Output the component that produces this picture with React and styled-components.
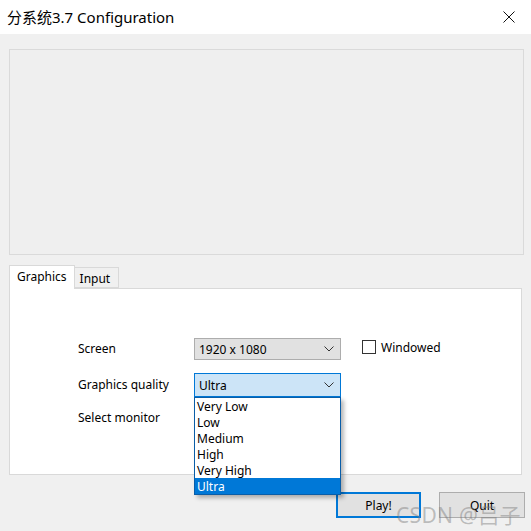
import React from "react";
import styled, { createGlobalStyle } from "styled-components";

const Global = createGlobalStyle`
  html, body { margin: 0; padding: 0; background: #f0f0f0; }
  body { font-family: "Segoe UI", "Noto Sans", "Noto Sans CJK SC", sans-serif; color: #000; }
`;

const Window = styled.div`
  width: 531px;
  height: 531px;
  background: #f0f0f0;
  position: relative;
  overflow: hidden;
`;

const TitleBar = styled.div`
  height: 34px;
  background: #fff;
  display: flex;
  align-items: center;
  justify-content: space-between;
  padding: 0 16px 0 7px;
  box-sizing: border-box;
`;

const Title = styled.div`
  font-size: 15px;
  font-family: "Segoe UI", "Noto Sans", "Noto Sans CJK SC", sans-serif;
  color: #000;
  margin-top: -2px;
`;

const CloseBtn = styled.div`
  width: 12px;
  height: 12px;
  display: flex;
`;

const Body = styled.div`
  padding: 15px 7px 0 9px;
  display: flex;
  flex-direction: column;
`;

const ImagePanel = styled.div`
  width: 515px;
  height: 206px;
  box-sizing: border-box;
  border: 1px solid #dadada;
  background: #efefef;
`;

const Tabs = styled.div`
  display: flex;
  align-items: flex-end;
  margin-top: 10px;
  height: 23px;
`;

const Tab = styled.div`
  box-sizing: border-box;
  height: ${(p) => (p.$active ? "24px" : "21px")};
  padding: ${(p) => (p.$active ? "2px 7px 0 7px" : "2px 8px 0 5px")};
  background: ${(p) => (p.$active ? "#fff" : "#f0f0f0")};
  border: 1px solid #d9d9d9;
  border-bottom: ${(p) => (p.$active ? "none" : "1px solid #d9d9d9")};
  ${(p) => (p.$active ? "" : "border-left: none;")}
  font-size: 12px;
  position: relative;
  z-index: ${(p) => (p.$active ? 2 : 1)};
  margin-bottom: ${(p) => (p.$active ? "-1px" : "0")};
`;

const TabPanel = styled.div`
  width: 513px;
  height: 187px;
  box-sizing: border-box;
  border: 1px solid #d9d9d9;
  background: #fff;
  padding: 49px 0 0 68px;
`;

const Form = styled.div`
  display: grid;
  grid-template-columns: 116px 147px auto;
  grid-template-rows: 22px 24px 16px;
  row-gap: 13px;
  align-items: center;
`;

const Label = styled.div`
  font-size: 12px;
  line-height: 16px;
`;

const ComboWrap = styled.div`
  position: relative;
  height: 100%;
`;

const Combo = styled.div`
  box-sizing: border-box;
  height: 100%;
  display: flex;
  align-items: center;
  justify-content: space-between;
  padding: 0 6px 0 4px;
  font-size: 12px;
  background: ${(p) => (p.$focused ? "#cce4f7" : "#e1e1e1")};
  border: 1px solid ${(p) => (p.$focused ? "#0078d7" : "#adadad")};
`;

const DropList = styled.div`
  position: absolute;
  left: 0;
  top: 100%;
  width: 147px;
  box-sizing: border-box;
  border: 1px solid #0a5ea8;
  background: #fff;
  box-shadow: 3px 3px 4px rgba(0, 0, 0, 0.28);
  z-index: 5;
`;

const Option = styled.div`
  height: 16px;
  line-height: 17px;
  padding-left: 2px;
  font-size: 12px;
  background: ${(p) => (p.$selected ? "#0078d7" : "transparent")};
  color: ${(p) => (p.$selected ? "#fff" : "#000")};
`;

const CheckRow = styled.label`
  display: flex;
  align-items: center;
  gap: 5px;
  margin-left: 21px;
  margin-top: -4px;
  font-size: 12px;
`;

const CheckBox = styled.span`
  width: 14px;
  height: 14px;
  box-sizing: border-box;
  border: 1px solid #333;
  background: #fff;
`;

const ButtonRow = styled.div`
  display: flex;
  justify-content: flex-end;
  gap: 18px;
  margin-top: 17px;
  margin-right: -1px;
`;

const Button = styled.div`
  box-sizing: border-box;
  width: ${(p) => (p.$primary ? "85px" : "86px")};
  height: 26px;
  display: flex;
  align-items: center;
  justify-content: center;
  font-size: 12px;
  background: #e1e1e1;
  border: ${(p) => (p.$primary ? "2px solid #0078d7" : "1px solid #adadad")};
`;

const Watermark = styled.div`
  position: absolute;
  left: 396px;
  top: 499px;
  font-size: 21px;
  font-family: "Noto Sans", "Noto Sans CJK SC", sans-serif;
  color: rgba(120, 120, 120, 0.45);
  letter-spacing: 0.3px;
  pointer-events: none;
  z-index: 10;
  white-space: nowrap;
`;

const Chevron = () => (
  <svg width="10" height="6" viewBox="0 0 10 6">
    <polyline points="0.5,0.5 5,5 9.5,0.5" fill="none" stroke="#333" strokeWidth="1" />
  </svg>
);

const options = ["Very Low", "Low", "Medium", "High", "Very High", "Ultra"];

export default function App() {
  return (
    <>
      <Global />
      <Window>
        <TitleBar>
          <Title>分系统3.7 Configuration</Title>
          <CloseBtn>
            <svg width="12" height="12" viewBox="0 0 12 12">
              <path d="M0.5 0.5 L11.5 11.5 M11.5 0.5 L0.5 11.5" stroke="#111" strokeWidth="1" fill="none" />
            </svg>
          </CloseBtn>
        </TitleBar>
        <Body>
          <ImagePanel />
          <Tabs>
            <Tab $active>Graphics</Tab>
            <Tab>Input</Tab>
          </Tabs>
          <TabPanel>
            <Form>
              <Label>Screen</Label>
              <ComboWrap>
                <Combo>
                  <span>1920 x 1080</span>
                  <Chevron />
                </Combo>
              </ComboWrap>
              <CheckRow>
                <CheckBox />
                <span>Windowed</span>
              </CheckRow>

              <Label>Graphics quality</Label>
              <ComboWrap>
                <Combo $focused>
                  <span>Ultra</span>
                  <Chevron />
                </Combo>
                <DropList>
                  {options.map((o) => (
                    <Option key={o} $selected={o === "Ultra"}>
                      {o}
                    </Option>
                  ))}
                </DropList>
              </ComboWrap>
              <span />

              <Label>Select monitor</Label>
              <span />
              <span />
            </Form>
          </TabPanel>
          <ButtonRow>
            <Button $primary>Play!</Button>
            <Button>Quit</Button>
          </ButtonRow>
        </Body>
        <Watermark>CSDN @吕子</Watermark>
      </Window>
    </>
  );
}
